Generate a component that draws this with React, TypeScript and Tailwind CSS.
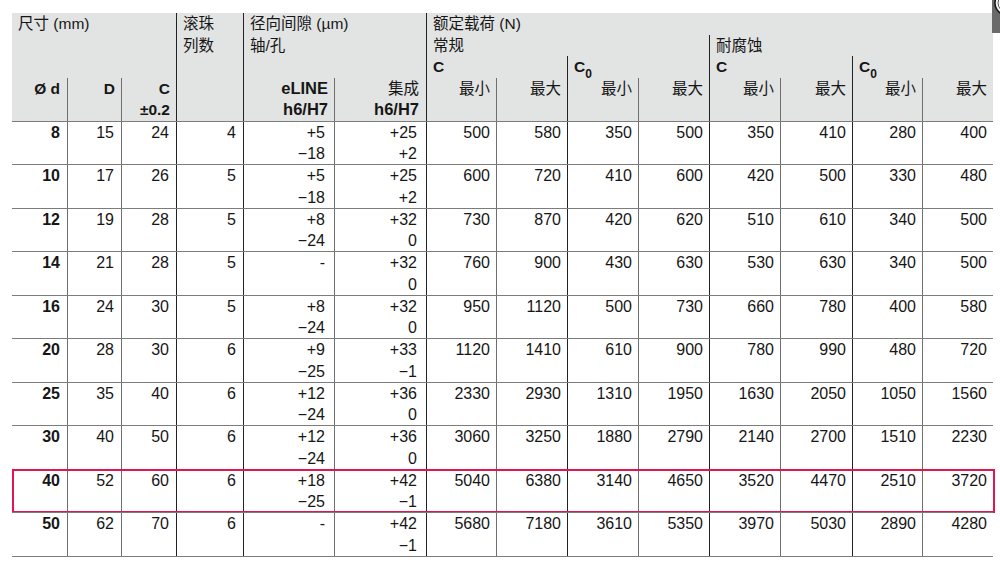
import React from 'react';

const gridCols =
  'grid grid-cols-[55px_54px_55px_67px_91px_92px_70px_71px_71px_71px_71px_72px_70px_71px]';
const major = 'border-l border-[#222]';
const minor = 'border-l border-[#6f6f6f]';

type Row = {
  d: string;
  D: string;
  C: string;
  n: string;
  eline: [string, string];
  integ: [string, string];
  loads: string[];
};

const rows: Row[] = [
  { d: '8', D: '15', C: '24', n: '4', eline: ['+5', '−18'], integ: ['+25', '+2'], loads: ['500', '580', '350', '500', '350', '410', '280', '400'] },
  { d: '10', D: '17', C: '26', n: '5', eline: ['+5', '−18'], integ: ['+25', '+2'], loads: ['600', '720', '410', '600', '420', '500', '330', '480'] },
  { d: '12', D: '19', C: '28', n: '5', eline: ['+8', '−24'], integ: ['+32', '0'], loads: ['730', '870', '420', '620', '510', '610', '340', '500'] },
  { d: '14', D: '21', C: '28', n: '5', eline: ['-', ''], integ: ['+32', '0'], loads: ['760', '900', '430', '630', '530', '630', '340', '500'] },
  { d: '16', D: '24', C: '30', n: '5', eline: ['+8', '−24'], integ: ['+32', '0'], loads: ['950', '1120', '500', '730', '660', '780', '400', '580'] },
  { d: '20', D: '28', C: '30', n: '6', eline: ['+9', '−25'], integ: ['+33', '−1'], loads: ['1120', '1410', '610', '900', '780', '990', '480', '720'] },
  { d: '25', D: '35', C: '40', n: '6', eline: ['+12', '−24'], integ: ['+36', '0'], loads: ['2330', '2930', '1310', '1950', '1630', '2050', '1050', '1560'] },
  { d: '30', D: '40', C: '50', n: '6', eline: ['+12', '−24'], integ: ['+36', '0'], loads: ['3060', '3250', '1880', '2790', '2140', '2700', '1510', '2230'] },
  { d: '40', D: '52', C: '60', n: '6', eline: ['+18', '−25'], integ: ['+42', '−1'], loads: ['5040', '6380', '3140', '4650', '3520', '4470', '2510', '3720'] },
  { d: '50', D: '62', C: '70', n: '6', eline: ['-', ''], integ: ['+42', '−1'], loads: ['5680', '7180', '3610', '5350', '3970', '5030', '2890', '4280'] },
];

// border for each load column (cols 7..14)
const loadBorders = [major, minor, major, minor, major, minor, major, minor];

function C0() {
  return (
    <span className="font-bold">
      C<sub className="text-[12px] font-bold align-[-3px]">0</sub>
    </span>
  );
}

function Header() {
  return (
    <div className={`${gridCols} grid-rows-[repeat(5,21.6px)] bg-[#e2e3e3] leading-[21.6px]`}>
      {/* 尺寸 */}
      <div className="col-start-1 col-span-3 row-start-1 row-span-3 pl-1.5">尺寸 (mm)</div>
      {/* 滚珠列数 */}
      <div className={`col-start-4 row-start-1 row-span-5 pl-1.5 ${major}`}>
        <div>滚珠</div>
        <div>列数</div>
      </div>
      {/* 径向间隙 */}
      <div className={`col-start-5 col-span-2 row-start-1 row-span-3 pl-1.5 ${major}`}>
        <div>径向间隙 (µm)</div>
        <div>轴/孔</div>
      </div>
      {/* 额定载荷 */}
      <div className={`col-start-7 col-span-8 row-start-1 pl-1.5 ${major}`}>额定载荷 (N)</div>
      <div className={`col-start-7 col-span-4 row-start-2 pl-1.5 ${major}`}>常规</div>
      <div className={`col-start-11 col-span-4 row-start-2 pl-1.5 ${major}`}>耐腐蚀</div>
      <div className={`col-start-7 col-span-2 row-start-3 pl-1.5 font-bold ${major}`}>C</div>
      <div className={`col-start-9 col-span-2 row-start-3 pl-1.5 ${major}`}>
        <C0 />
      </div>
      <div className={`col-start-11 col-span-2 row-start-3 pl-1.5 font-bold ${major}`}>C</div>
      <div className={`col-start-13 col-span-2 row-start-3 pl-1.5 ${major}`}>
        <C0 />
      </div>

      {/* bottom two rows */}
      <div className="col-start-1 row-start-4 row-span-2 pr-[7px] text-right font-bold">Ø d</div>
      <div className={`col-start-2 row-start-4 row-span-2 pr-1.5 text-right font-bold ${minor}`}>D</div>
      <div className={`col-start-3 row-start-4 row-span-2 pr-1.5 text-right font-bold ${minor}`}>
        <div>C</div>
        <div>±0.2</div>
      </div>
      <div className={`col-start-5 row-start-4 row-span-2 pr-1.5 text-right font-bold ${major}`}>
        <div className="text-[16.5px]">eLINE</div>
        <div className="text-[16.5px]">h6/H7</div>
      </div>
      <div className={`col-start-6 row-start-4 row-span-2 pr-[7px] text-right ${minor}`}>
        <div>集成</div>
        <div className="text-[16.5px] font-bold">h6/H7</div>
      </div>
      {['最小', '最大', '最小', '最大', '最小', '最大', '最小', '最大'].map((t, i) => (
        <div key={i} className={`row-start-4 row-span-2 pr-1.5 text-right ${loadBorders[i]}`}>
          {t}
        </div>
      ))}
    </div>
  );
}

function DataRow({ r, highlight }: { r: Row; highlight?: boolean }) {
  const cell = 'pr-[7px] text-right';
  return (
    <div className={`${gridCols} relative h-[43.5px] border-t border-[#7c7c7c] text-[16px] leading-[21.5px]`}>
      <div className={`${cell} font-bold`}>{r.d}</div>
      <div className={`${cell} ${minor}`}>{r.D}</div>
      <div className={`${cell} ${minor}`}>{r.C}</div>
      <div className={`${cell} ${major}`}>{r.n}</div>
      <div className={`pr-[9px] text-right ${major}`}>
        <div>{r.eline[0]}</div>
        <div>{r.eline[1]}</div>
      </div>
      <div className={`pr-[9px] text-right ${minor}`}>
        <div>{r.integ[0]}</div>
        <div>{r.integ[1]}</div>
      </div>
      {r.loads.map((v, i) => (
        <div key={i} className={`pr-1.5 text-right ${loadBorders[i]}`}>
          {v}
        </div>
      ))}
      {highlight && (
        <div className="pointer-events-none absolute -top-px -bottom-px left-0 -right-[2px] border-2 border-[#e3144e]" />
      )}
    </div>
  );
}

export default function App() {
  return (
    <div className="relative h-[569px] w-[1000px] overflow-hidden bg-white pl-[12px] pt-[13px] font-['Liberation_Sans','Noto_Sans_CJK_SC',sans-serif] text-[15.5px] text-[#161616]">
      <div className="w-[981px]">
        <Header />
        <div className="border-b border-[#7c7c7c]">
          {rows.map((r) => (
            <DataRow key={r.d} r={r} highlight={r.d === '40'} />
          ))}
        </div>
      </div>

      {/* cropped ornament at top right */}
      <div className="absolute right-0 top-0 h-[33px] w-[8px] overflow-hidden bg-[#6a6a6a]">
        <svg width="8" height="33" viewBox="0 0 8 33">
          <circle cx="15" cy="3" r="12" fill="#f4f4f4" stroke="#111" strokeWidth="1.5" />
          <circle cx="15" cy="3" r="9" fill="none" stroke="#555" strokeWidth="1" />
        </svg>
      </div>
    </div>
  );
}
